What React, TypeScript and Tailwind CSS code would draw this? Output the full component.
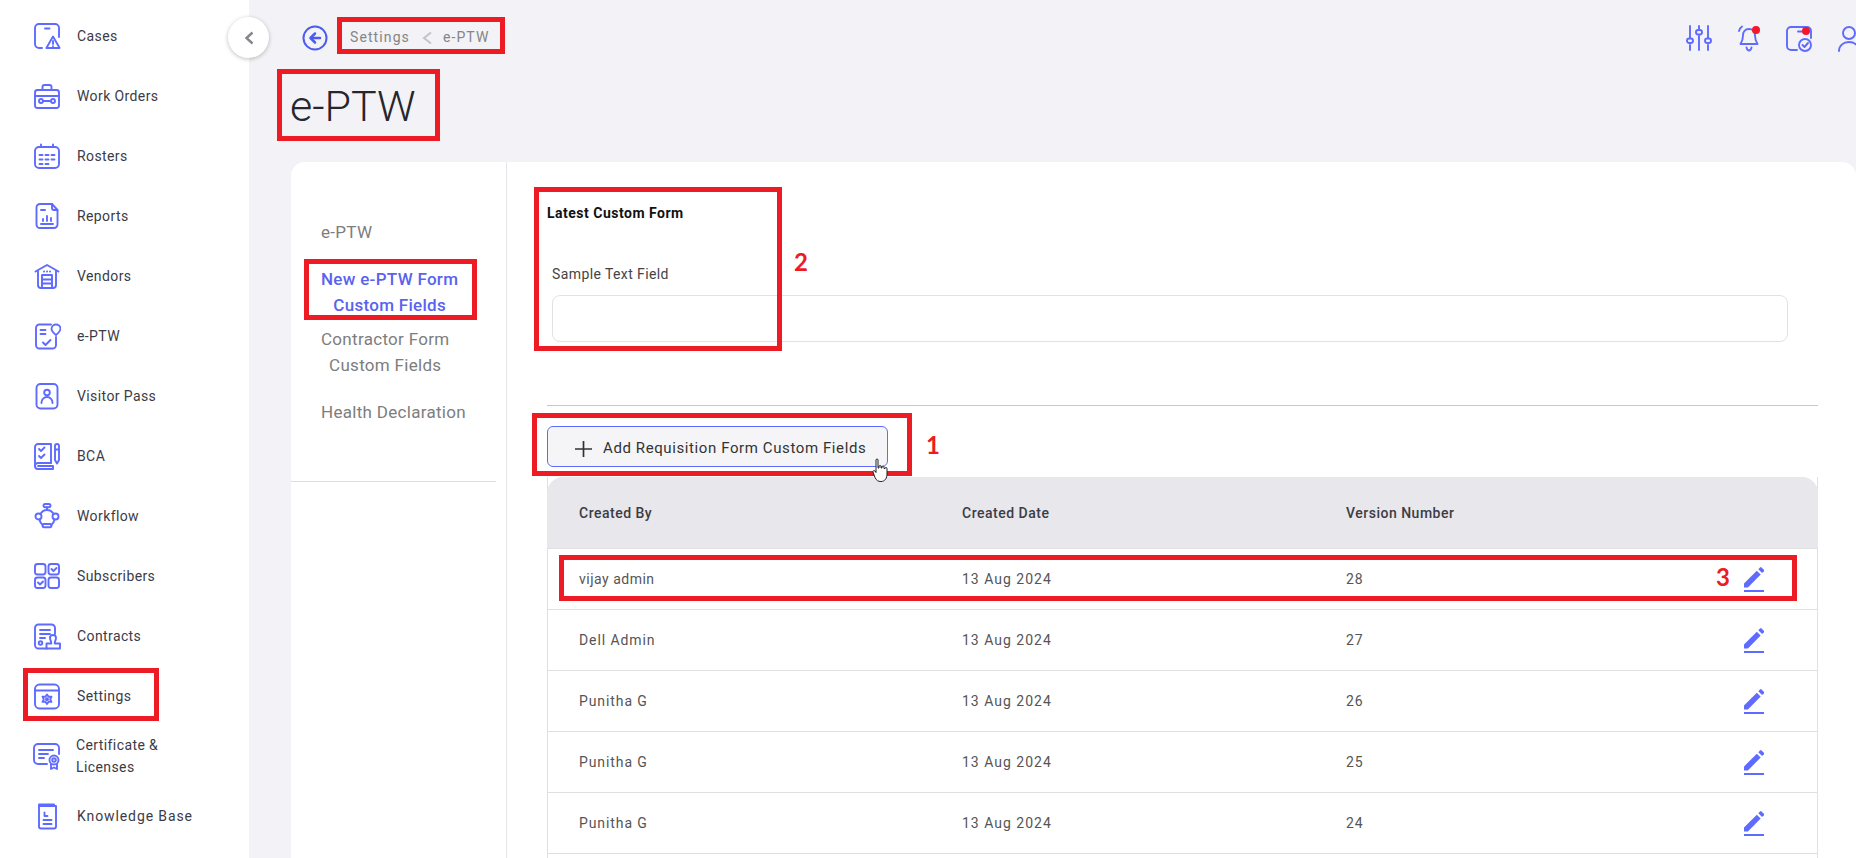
import React from "react";

const C = "#5f6bff";

function Ico({ children, w = 28, h = 28 }: { children: React.ReactNode; w?: number; h?: number }) {
  return (
    <svg width={w} height={h} viewBox="0 0 28 28" fill="none" stroke={C} strokeWidth={1.9} strokeLinecap="round" strokeLinejoin="round">
      {children}
    </svg>
  );
}

const icons: Record<string, React.ReactNode> = {
  cases: (
    <Ico>
      <path d="M9 26H6a4 4 0 0 1-4-4V6a4 4 0 0 1 4-4h16a4 4 0 0 1 4 4v9" />
      <path d="M12 6.500h4.500" />
      <path d="M20 14.500l6.600 11.500H13.400z" />
      <path d="M20 19v3M20 24.200v.1" />
    </Ico>
  ),
  work: (
    <Ico>
      <rect x="2" y="8" width="24" height="18" rx="2.500" />
      <path d="M9.500 8V5a2 2 0 0 1 2-2h5a2 2 0 0 1 2 2v3" />
      <path d="M2 14h24" />
      <circle cx="8" cy="19" r="2" />
      <circle cx="20" cy="19" r="2" />
      <path d="M10 19h8" />
    </Ico>
  ),
  rosters: (
    <Ico>
      <rect x="2" y="5" width="24" height="21" rx="4" />
      <path d="M8 2.500V5M20 2.500V5" />
      <path d="M6.500 13h3M12.500 13h3M18.500 13h3M6.500 17.500h3M12.500 17.500h3M18.500 17.500h3M12.500 22h3M6.500 22h3" />
    </Ico>
  ),
  reports: (
    <Ico>
      <path d="M19 2H7a3.500 3.500 0 0 0-3.500 3.500v17A3.500 3.500 0 0 0 7 26h14a3.500 3.500 0 0 0 3.500-3.500V8z" />
      <path d="M19 2v4a2 2 0 0 0 2 2h3.500" />
      <path d="M8 8h4" />
      <path d="M8 22h12M10 19v-2M14 19v-5M18 19v-3" />
    </Ico>
  ),
  vendors: (
    <Ico>
      <path d="M2.500 9.500L14 3l11.500 6.500" />
      <path d="M5 9v14a3 3 0 0 0 3 3h12a3 3 0 0 0 3-3V9" />
      <rect x="9" y="13" width="10" height="13" />
      <path d="M9 17.500h10M9 21.500h10M11 9.500h.1M14 9.500h.1M17 9.500h.1" />
    </Ico>
  ),
  eptw: (
    <Ico>
      <path d="M18 2.500H6.500A3.500 3.500 0 0 0 3 6v17a3.500 3.500 0 0 0 3.500 3.500h13A3.500 3.500 0 0 0 23 23v-8" />
      <path d="M7.500 8h5M7.500 12h5" />
      <path d="M10 20.500l2.500 2.500 5-5" />
      <path d="M23 13c-3-2.500-4.500-4-4.500-6.300A4.500 4.500 0 0 1 23 2.500a4.500 4.500 0 0 1 4.500 4.200C27.500 9 26 10.500 23 13z" />
    </Ico>
  ),
  visitor: (
    <Ico>
      <rect x="3.500" y="2" width="21" height="24.500" rx="4" />
      <circle cx="14" cy="10.500" r="2.800" />
      <path d="M8.500 21v-.5a5.500 5.500 0 0 1 11 0v.5" />
    </Ico>
  ),
  bca: (
    <Ico>
      <path d="M18 21V2H5a3 3 0 0 0-3 3v19" />
      <path d="M18 21H5a3 3 0 0 0 0 6h15v-3H5" />
      <path d="M6 7l2 2 3.500-3.500M6 14l2 2 3.500-3.500" />
      <path d="M22 4a2 2 0 0 1 4 0v14l-2 3.500-2-3.500zM22 7.500h4" />
    </Ico>
  ),
  workflow: (
    <Ico>
      <rect x="10.500" y="2" width="7" height="3.200" rx="1.600" />
      <circle cx="5.500" cy="14.500" r="3" />
      <circle cx="22.500" cy="14.500" r="3" />
      <rect x="9.500" y="22" width="9" height="3.200" rx="1.600" />
      <path d="M14 5.200v2.800M7.500 11.800C9 9.300 11 8 14 8s5 1.300 6.500 3.800M6.500 17.500c.4 2.500 1.300 4 3.200 5.500M21.500 17.500c-.4 2.500-1.300 4-3.200 5.500" />
    </Ico>
  ),
  subscribers: (
    <Ico>
      <rect x="2" y="2" width="10.500" height="10.500" rx="2.500" />
      <rect x="15.500" y="2" width="10.500" height="10.500" rx="2.500" />
      <rect x="2" y="15.500" width="10.500" height="10.500" rx="2.500" />
      <rect x="15.500" y="15.500" width="10.500" height="10.500" rx="2.500" />
      <path d="M18.500 7l2 2 3-3M5 20.500l2 2 3-3" />
    </Ico>
  ),
  contracts: (
    <Ico>
      <path d="M22 12V6a3.500 3.500 0 0 0-3.500-3.500h-13A3.500 3.500 0 0 0 2 6v17a3.500 3.500 0 0 0 3.500 3.500H14" />
      <path d="M7 8h10M7 12h10M7 16h5" />
      <circle cx="7.500" cy="21" r="1.800" />
      <path d="M20 13a3 3 0 0 1 3 3c0 2-1.300 3-1.300 5.500H27v5H13.500v-5h4.800c0-2.500-1.300-3.500-1.300-5.500a3 3 0 0 1 3-3z" />
    </Ico>
  ),
  settings: (
    <Ico>
      <rect x="2" y="2.500" width="24" height="24" rx="4.500" />
      <path d="M2 8.500h24" />
      <path d="M14 12.500l1.600 2.300 2.900-.1-1.300 2.600 1.300 2.600-2.900-.1L14 22l-1.600-2.200-2.900.1 1.300-2.600-1.300-2.600 2.900.1z" />
      <circle cx="14" cy="17.300" r="1" />
    </Ico>
  ),
  cert: (
    <Ico>
      <path d="M14 22H5a4 4 0 0 1-4-4V6a4 4 0 0 1 4-4h17a4 4 0 0 1 4 4v6" />
      <path d="M6 8h14M6 12h9M6 16h5" />
      <circle cx="21" cy="18" r="4.500" />
      <circle cx="21" cy="18" r="1.800" />
      <path d="M18 22.500V27l3-1.500 3 1.500v-4.500" />
    </Ico>
  ),
  kb: (
    <Ico>
      <path d="M6 4V2.500h15" />
      <path d="M6 4h17v20.500a2 2 0 0 1-2 2H8a2 2 0 0 1-2-2z" />
      <path d="M11.500 10.500v3.500h3M10.500 18h8M10.500 22h8" />
    </Ico>
  ),
};

const menu: [string, string][] = [
  ["cases", "Cases"],
  ["work", "Work Orders"],
  ["rosters", "Rosters"],
  ["reports", "Reports"],
  ["vendors", "Vendors"],
  ["eptw", "e-PTW"],
  ["visitor", "Visitor Pass"],
  ["bca", "BCA"],
  ["workflow", "Workflow"],
  ["subscribers", "Subscribers"],
  ["contracts", "Contracts"],
  ["settings", "Settings"],
];

const rows: [string, string, string, string][] = [
  ["vijay admin", "13 Aug 2024", "28", "tracking-[0.5px]"],
  ["Dell Admin", "13 Aug 2024", "27", "tracking-[0.9px]"],
  ["Punitha G", "13 Aug 2024", "26", "tracking-[0.9px]"],
  ["Punitha G", "13 Aug 2024", "25", "tracking-[0.9px]"],
  ["Punitha G", "13 Aug 2024", "24", "tracking-[0.9px]"],
];

function Row({ icon, children }: { icon: string; children: React.ReactNode }) {
  return (
    <div className="h-[60px] flex items-center shrink-0">
      <div className="w-[77px] pl-[33px] shrink-0 flex">{icons[icon]}</div>
      <div className="text-[14px] tracking-[0.4px] text-[#3b3b47]">{children}</div>
    </div>
  );
}

function Pencil() {
  return (
    <svg width="20" height="25" viewBox="0 0 20 25" fill={C}>
      <path d="M0 16.500L12.800 3.700l3.900 3.900L3.900 20.400H0z" />
      <path d="M14.300 2.200L16.100.4a1 1 0 0 1 1.400 0l2.400 2.400a1 1 0 0 1 0 1.400l-1.800 1.800z" />
      <rect x="0" y="23" width="20" height="2" />
    </svg>
  );
}

function RedBox({ className }: { className: string }) {
  return <div className={"absolute border-[5px] border-[#ed1c24] pointer-events-none " + className} />;
}

function Num({ className, children }: { className: string; children: React.ReactNode }) {
  return (
    <div className={"absolute text-[24px] font-bold leading-none text-[#ed1c24] font-['Lato',sans-serif] " + className}>
      {children}
    </div>
  );
}

export default function App() {
  return (
    <div className="relative flex h-[858px] w-[1856px] overflow-hidden bg-[#f2f2f7] font-['Roboto',sans-serif]">
      <aside className="w-[249px] shrink-0 bg-white pt-[6px] flex flex-col">
        {menu.map(([i, l]) => (
          <Row key={i} icon={i}>
            {l}
          </Row>
        ))}
        <Row icon="cert">
          <div className="leading-[22px] -ml-[1px]">
            Certificate &amp;
            <br />
            Licenses
          </div>
        </Row>
        <Row icon="kb">
          <span className="tracking-[0.9px]">Knowledge Base</span>
        </Row>
      </aside>

      <main className="flex-1 min-w-0 flex flex-col">
        <div className="h-[75px] shrink-0 flex items-center pl-[53px]">
          <svg width="26" height="26" viewBox="0 0 26 26" fill="none" className="shrink-0">
            <circle cx="13" cy="13" r="11.500" stroke="#4d5bf0" strokeWidth="2" />
            <path d="M13 8.500L8.500 13l4.500 4.500" stroke="#4d5bf0" strokeWidth="2.500" strokeLinecap="round" strokeLinejoin="round" />
            <path d="M9 13h9" stroke="#4d5bf0" strokeWidth="2.500" strokeLinecap="round" />
          </svg>
          <div className="ml-[22px] flex items-center text-[14px] tracking-[1.1px] text-[#858585]">
            <span>Settings</span>
            <svg width="12" height="14" viewBox="0 0 12 14" fill="none" className="ml-[11px] mr-[10px]">
              <path d="M10 1.500L3 7l7 5.500" stroke="#c4c4c8" strokeWidth="2" />
            </svg>
            <span>e-PTW</span>
          </div>
          <div className="ml-auto flex items-center gap-[24px] mr-[-6px] mt-[2px]">
            <svg width="26" height="27" viewBox="0 0 26 27" fill="none" stroke={C} strokeWidth="1.900" strokeLinecap="round">
              <path d="M4 1v12M4 20v5M13 1v3M13 11v14M22 1v12M22 20v5" />
              <rect x="1" y="13.500" width="6" height="4.500" rx="2.200" />
              <rect x="10" y="5" width="6" height="4.500" rx="2.200" />
              <rect x="19" y="13.500" width="6" height="4.500" rx="2.200" />
            </svg>
            <div className="relative w-[26px] h-[27px]">
              <svg width="26" height="27" viewBox="0 0 26 27" fill="none" stroke={C} strokeWidth="1.900" strokeLinecap="round" strokeLinejoin="round">
                <path d="M13 4c-4 0-6 3-6 6.500 0 4-1 6-2.500 8.500h17C20 16.500 19 14.500 19 10.500 19 7 17 4 13 4z" />
                <path d="M10.500 22.500c.5 2 1.500 3 2.500 3s2-1 2.500-3" />
                <path d="M3 6c.5-2 1.500-3.500 3-4.500" />
              </svg>
              <span className="absolute right-[2px] top-[1px] h-[8px] w-[8px] rounded-full bg-[#f5162c]" />
            </div>
            <div className="relative w-[26px] h-[27px]">
              <svg width="26" height="27" viewBox="0 0 26 27" fill="none" stroke={C} strokeWidth="1.900" strokeLinecap="round" strokeLinejoin="round">
                <path d="M11 25H5a4 4 0 0 1-4-4V6a4 4 0 0 1 4-4h16a4 4 0 0 1 4 4v7" />
                <path d="M12 6.500h5" />
                <circle cx="19" cy="20" r="6" />
                <path d="M16.500 20l2 2 3.500-4" />
              </svg>
              <span className="absolute right-[2px] top-[2px] h-[8px] w-[8px] rounded-full bg-[#f5162c]" />
            </div>
            <svg width="26" height="27" viewBox="0 0 26 27" fill="none" stroke={C} strokeWidth="1.900" strokeLinecap="round">
              <circle cx="13" cy="8" r="6" />
              <path d="M3 26c0-5 4-9 10-9s10 4 10 9" />
            </svg>
          </div>
        </div>

        <div className="h-[87px] shrink-0 pl-[41px] flex items-start">
          <h1 className="text-[43px] leading-[62px] font-light text-[#26262c]">e-PTW</h1>
        </div>

        <div className="ml-[42px] flex-1 flex bg-white rounded-t-[14px] overflow-hidden min-h-0">
          <div className="w-[216px] shrink-0 border-r border-[#e6e6e9]">
            <nav className="w-[205px] h-[320px] border-b border-[#dedee0] pl-[30px] pt-[57px] text-[17px] tracking-[0.3px] leading-[26px] text-[#7d7d7d]">
              <div className="w-fit text-center">e-PTW</div>
              <div className="w-fit text-center mt-[21px] font-medium text-[#5a63f0]">
                New e-PTW Form
                <br />
                Custom Fields
              </div>
              <div className="w-fit text-center mt-[8px]">
                Contractor Form
                <br />
                Custom Fields
              </div>
              <div className="w-fit text-center mt-[21px]">Health Declaration</div>
            </nav>
          </div>

          <div className="flex-1 min-w-0 pl-[40px] pr-[38px] pt-[43px]">
            <div className="text-[14px] tracking-[0.5px] leading-[16px] font-bold text-[#111]">Latest Custom Form</div>
            <div className="mt-[45px] pl-[5px] pr-[30px]">
              <div className="text-[14px] tracking-[0.4px] leading-[16px] text-[#444]">Sample Text Field</div>
              <div className="mt-[13px] h-[47px] rounded-[8px] border border-[#e2e2e5]" />
            </div>
            <div className="mt-[63px] border-t border-[#c8c8cc]" />
            <button className="mt-[20px] h-[41px] w-[341px] flex items-center gap-[11px] pl-[27px] pt-[4px] rounded-[6px] border border-[#5f6bff] bg-[#f5f5f7] text-[15px] tracking-[0.6px] text-[#333]">
              <svg width="17" height="16" viewBox="0 0 17 16" fill="none" stroke="#333" strokeWidth="1.700">
                <path d="M8.500 0v16M0 8h17" />
              </svg>
              Add Requisition Form Custom Fields
            </button>
            <div className="mt-[10px] border-x border-[#e0e0e3]">
              <div className="h-[71px] rounded-t-[16px] -mx-px bg-[#e7e7ec] grid grid-cols-[383px_384px_1fr] items-center pl-[32px] pt-[2px] text-[14px] font-medium tracking-[0.5px] text-[#3c3c44]">
                <div>Created By</div>
                <div>Created Date</div>
                <div>Version Number</div>
              </div>
              {rows.map((r, i) => (
                <div key={i} className="h-[61px] border-t border-[#e0e0e3] grid grid-cols-[383px_384px_1fr_auto] items-center pl-[31px] pr-[53px] text-[14px] tracking-[1px] text-[#555]">
                  <div className={r[3]}>{r[0]}</div>
                  <div>{r[1]}</div>
                  <div>{r[2]}</div>
                  <Pencil />
                </div>
              ))}
              <div className="h-[61px] border-t border-[#e0e0e3]" />
            </div>
          </div>
        </div>
      </main>

      <button className="absolute left-[228px] top-[17px] h-[41px] w-[41px] rounded-full bg-white shadow-[0_1px_4px_rgba(0,0,0,0.25)] flex items-center justify-center">
        <svg width="10" height="14" viewBox="0 0 10 14" fill="none">
          <path d="M8.500 1.500L2.500 7l6 5.500" stroke="#85858a" strokeWidth="2.400" />
        </svg>
      </button>

      <RedBox className="left-[23px] top-[668px] w-[136px] h-[53px]" />
      <RedBox className="left-[337px] top-[17px] w-[168px] h-[37px]" />
      <RedBox className="left-[277px] top-[69px] w-[163px] h-[72px]" />
      <RedBox className="left-[304px] top-[259px] w-[173px] h-[61px]" />
      <RedBox className="left-[534px] top-[187px] w-[248px] h-[164px]" />
      <RedBox className="left-[532px] top-[413px] w-[380px] h-[63px]" />
      <RedBox className="left-[559px] top-[555px] w-[1238px] h-[46px]" />
      <Num className="left-[926px] top-[433px]">1</Num>
      <Num className="left-[794px] top-[250px]">2</Num>
      <Num className="left-[1716px] top-[565px]">3</Num>

      <svg width="16" height="25" viewBox="0 0 16 25" className="absolute left-[872px] top-[458px]" fill="#fff" stroke="#222" strokeWidth="1">
        <path d="M4 2a1 1 0 0 1 2 0v8l1 0V8.500a1 1 0 0 1 2 0V10l1 0V9a1 1 0 0 1 2 0v1.500l1 0a1 1 0 0 1 2 0V16c0 4-2 7.500-6 7.500-3 0-4.500-1-6-4L1 14c-.5-1 1-2 2-1l1 1.500z" />
      </svg>
    </div>
  );
}
